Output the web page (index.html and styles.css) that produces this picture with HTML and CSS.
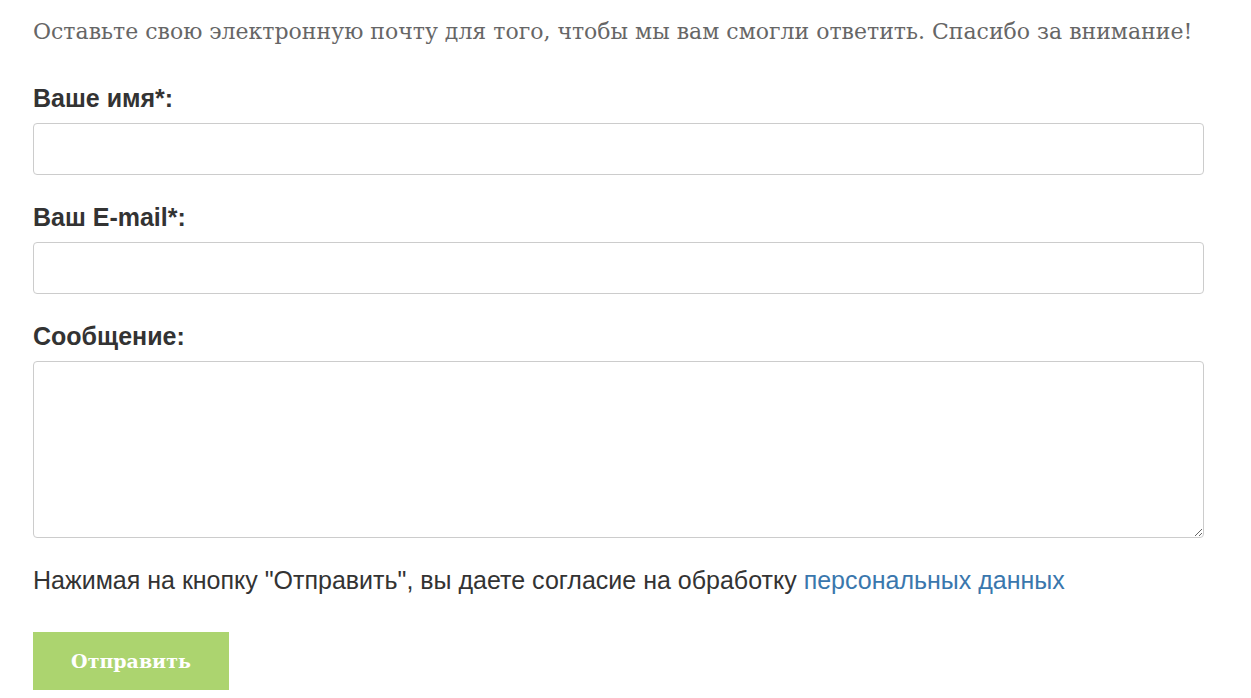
FILE: index.html
```html
<!DOCTYPE html>
<html lang="ru">
<head>
<meta charset="utf-8">
<link rel="stylesheet" href="styles.css">
</head>
<body>
<div class="page">
  <p class="intro">Оставьте свою электронную почту для того, чтобы мы вам смогли ответить. Спасибо за внимание!</p>
  <form class="form">
    <label class="label">Ваше имя*:</label>
    <input class="field" type="text">
    <label class="label">Ваш E-mail*:</label>
    <input class="field" type="text">
    <label class="label">Сообщение:</label>
    <textarea class="field area"></textarea>
    <p class="consent">Нажимая на кнопку "Отправить", вы даете согласие на обработку <a class="link" href="#">персональных данных</a></p>
    <button class="btn" type="button">Отправить</button>
  </form>
</div>
</body>
</html>
```
FILE: styles.css
```css
html, body { margin: 0; padding: 0; background: #fff; }
.page { padding: 17px 48px 0 33px; }
.intro {
  margin: 0 0 9px;
  font-family: "DejaVu Serif", serif;
  font-size: 22px;
  line-height: 30px;
  color: #666;
}
.form { display: flex; flex-direction: column; align-items: flex-start; }
.label {
  margin-top: 29px;
  font-family: "Liberation Sans", Arial, sans-serif;
  font-weight: bold;
  font-size: 25px;
  line-height: 26px;
  color: #333;
}
.field {
  box-sizing: border-box;
  width: 1171px;
  height: 52px;
  margin-top: 12px;
  border: 1px solid #ccc;
  border-radius: 4px;
  background: #fff;
  font-size: 18px;
}
.area { height: 177px; resize: vertical; }
.consent {
  margin: 27px 0 0;
  font-family: "Liberation Sans", Arial, sans-serif;
  font-size: 25px;
  line-height: 30px;
  color: #333;
}
.link { color: #3a77ad; text-decoration: none; }
.btn {
  margin-top: 37px;
  width: 196px;
  height: 58px;
  border: 0;
  background: #acd46f;
  color: #fff;
  font-family: "DejaVu Serif", serif;
  font-weight: bold;
  font-size: 19px;
}
```
